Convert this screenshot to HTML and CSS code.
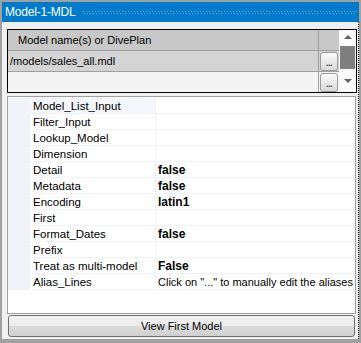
FILE: index.html
```html
<!DOCTYPE html>
<html lang="en">
<head>
  <meta charset="UTF-8">
  <title>Model-1-MDL</title>
  <link rel="stylesheet" href="styles.css">
</head>
<body>
  <div class="window">
    <div class="titlebar">
      <span class="title">Model-1-MDL</span>
      <span class="grip"></span>
    </div>
    <div class="content">
      <div class="models">
        <div class="models-main">
          <div class="mrow head">
            <div class="mname">Model name(s) or DivePlan</div>
            <div class="mbtn"></div>
          </div>
          <div class="mrow current">
            <div class="mname">/models/sales_all.mdl</div>
            <div class="mbtn"><button class="ellipsis">...</button></div>
          </div>
          <div class="mrow blank">
            <div class="mname"></div>
            <div class="mbtn"><button class="ellipsis">...</button></div>
          </div>
        </div>
        <div class="vscroll">
          <span class="arrow up"></span>
          <span class="thumb"></span>
          <span class="arrow down"></span>
        </div>
      </div>

      <div class="props">
        <div class="prow selected"><div class="margin"></div><div class="plabel">Model_List_Input</div><div class="pvalue"></div></div>
        <div class="prow"><div class="margin"></div><div class="plabel">Filter_Input</div><div class="pvalue"></div></div>
        <div class="prow"><div class="margin"></div><div class="plabel">Lookup_Model</div><div class="pvalue"></div></div>
        <div class="prow"><div class="margin"></div><div class="plabel">Dimension</div><div class="pvalue"></div></div>
        <div class="prow"><div class="margin"></div><div class="plabel">Detail</div><div class="pvalue bold">false</div></div>
        <div class="prow"><div class="margin"></div><div class="plabel">Metadata</div><div class="pvalue bold">false</div></div>
        <div class="prow"><div class="margin"></div><div class="plabel">Encoding</div><div class="pvalue bold">latin1</div></div>
        <div class="prow"><div class="margin"></div><div class="plabel">First</div><div class="pvalue"></div></div>
        <div class="prow"><div class="margin"></div><div class="plabel">Format_Dates</div><div class="pvalue bold">false</div></div>
        <div class="prow"><div class="margin"></div><div class="plabel">Prefix</div><div class="pvalue"></div></div>
        <div class="prow"><div class="margin"></div><div class="plabel">Treat as multi-model</div><div class="pvalue bold">False</div></div>
        <div class="prow"><div class="margin"></div><div class="plabel">Alias_Lines</div><div class="pvalue">Click on "..." to manually edit the aliases</div></div>
      </div>

      <button class="view">View First Model</button>
    </div>
  </div>
</body>
</html>
```

FILE: styles.css
```css
* {
  box-sizing: border-box;
}
html {
  background-color: #a0a0a0;
}
body {
  margin: 0;
  padding: 2px 0 0 2px;
  font-family: 'Liberation Sans', Arial, sans-serif;
  font-size: 11px;
  color: #000;
}
.window {
  width: 357px;
  height: 337px;
  display: flex;
  flex-direction: column;
}
.titlebar {
  height: 20px;
  background-color: #007acc;
  display: flex;
  align-items: center;
  padding-left: 3px;
}
.title {
  color: #fff;
  font-size: 12px;
  letter-spacing: -0.2px;
}
.grip {
  flex: 1;
  height: 3px;
  margin: 1px 2px 0 7px;
  background-image:
    linear-gradient(to right, #66b2e6 1px, transparent 1px),
    linear-gradient(to right, #66b2e6 1px, transparent 1px);
  background-size: 3px 1px, 3px 1px;
  background-position: 0 0, 1px 2px;
  background-repeat: repeat-x;
}
.content {
  flex: 1;
  background-color: #f0f0f0;
  border-right: 1px dotted #000;
  padding: 7px 1px 2px 5px;
  display: flex;
  flex-direction: column;
}

/* models list */
.models {
  height: 64px;
  border: 1px solid #000;
  display: flex;
  overflow: hidden;
}
.models-main {
  flex: 1;
  display: flex;
  flex-direction: column;
}
.mrow {
  display: flex;
  border-bottom: 1px solid #a0a0a0;
}
.mrow.head {
  height: 23px;
  background-color: #c8c8c8;
}
.mrow.current {
  height: 22px;
  background-color: #d4d4d4;
}
.mrow.blank {
  height: 22px;
  background-color: #f4f4f4;
  border-bottom: none;
}
.mname {
  flex: 1;
  display: flex;
  align-items: center;
  padding-left: 2px;
  border-right: 1px solid #a0a0a0;
}
.head .mname {
  padding-left: 10px;
}
.mbtn {
  width: 20px;
  padding: 1px 0 0 1px;
}
.ellipsis {
  width: 18px;
  height: 19px;
  padding: 0 0 2px;
  border: 1px solid #9a9a9a;
  border-radius: 3px;
  background: linear-gradient(#fcfcfc, #e6e6e6 60%, #dadada);
  font-family: 'Liberation Sans', Arial, sans-serif;
  font-size: 9px;
  font-weight: bold;
  color: #404060;
  letter-spacing: -0.5px;
  display: flex;
  align-items: flex-end;
  justify-content: center;
}
.vscroll {
  width: 17px;
  background-color: #fafafa;
  display: flex;
  flex-direction: column;
  align-items: center;
}
.arrow {
  width: 0;
  height: 0;
  border-left: 4px solid transparent;
  border-right: 4px solid transparent;
}
.arrow.up {
  margin-top: 5px;
  border-bottom: 4px solid #606060;
}
.arrow.down {
  margin-top: 10px;
  border-top: 4px solid #606060;
}
.thumb {
  width: 15px;
  height: 23px;
  margin-top: 7px;
  background-color: #7f7f7f;
}

/* property grid */
.props {
  height: 218px;
  margin: 3px 1px 0 0;
  padding-top: 1px;
  border: 1px solid #a0a0a0;
  background-color: #fff;
}
.prow {
  display: flex;
  height: 16px;
}
.margin {
  width: 22px;
  background-color: #f0f3f8;
}
.plabel {
  width: 126px;
  padding: 1px 0 0 3px;
  line-height: 14px;
  font-size: 11.5px;
  border-bottom: 1px solid #f0f3f8;
  border-right: 1px solid #f0f3f8;
  white-space: nowrap;
}
.prow.selected .plabel {
  background-color: #f3f6fa;
}
.pvalue {
  flex: 1;
  padding: 1px 0 0 2px;
  line-height: 14px;
  border-bottom: 1px solid #f0f3f8;
  white-space: nowrap;
  overflow: hidden;
}
.pvalue.bold {
  font-weight: bold;
  font-size: 12px;
}

.view {
  height: 22px;
  margin: 1px 2px 0 1px;
  border: 1px solid #707070;
  border-radius: 3px;
  background: linear-gradient(#f2f2f2, #ebebeb 50%, #dddddd 51%, #cfcfcf);
  font-family: 'Liberation Sans', Arial, sans-serif;
  font-size: 11px;
  color: #000;
}
```
